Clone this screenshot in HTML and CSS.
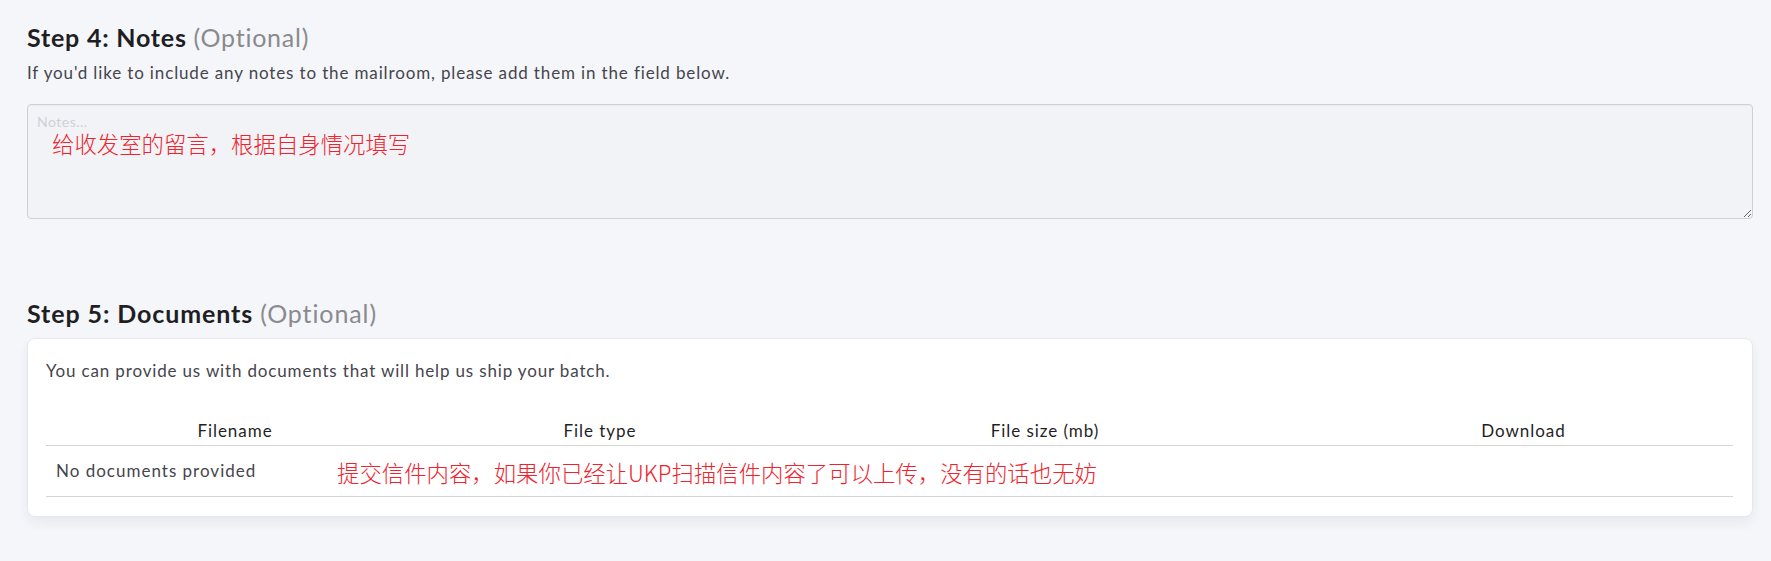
FILE: index.html
```html
<!DOCTYPE html>
<html lang="en">
<head>
<meta charset="utf-8">
<title>Notes and Documents</title>
<link rel="stylesheet" href="styles.css">
</head>
<body>
<main class="page">
  <section class="step">
    <h2 class="step-title">Step 4: Notes <span class="optional">(Optional)</span></h2>
    <p class="step-desc">If you'd like to include any notes to the mailroom, please add them in the field below.</p>
    <div class="notes-wrap">
      <textarea class="notes" placeholder="Notes..."></textarea>
      <span class="annot annot-notes">给收发室的留言，根据自身情况填写</span>
    </div>
  </section>

  <section class="step step-docs">
    <h2 class="step-title step-title-wide">Step 5: Documents <span class="optional">(Optional)</span></h2>
    <div class="card">
      <p class="card-desc">You can provide us with documents that will help us ship your batch.</p>
      <table class="docs">
        <colgroup>
          <col class="c-name">
          <col class="c-type">
          <col class="c-size">
          <col class="c-dl">
        </colgroup>
        <thead>
          <tr>
            <th>Filename</th>
            <th>File type</th>
            <th>File size (mb)</th>
            <th>Download</th>
          </tr>
        </thead>
        <tbody>
          <tr>
            <td colspan="4" class="empty">No documents provided<span class="annot annot-docs">提交信件内容，如果你已经让UKP扫描信件内容了可以上传，没有的话也无妨</span></td>
          </tr>
        </tbody>
      </table>
    </div>
  </section>
</main>
</body>
</html>
```

FILE: styles.css
```css
* { box-sizing: border-box; }

html, body {
  margin: 0;
  padding: 0;
  background: #f5f6fa;
}

body {
  font-family: Lato, "Noto Sans", sans-serif;
  color: #3c3c44;
}

.page {
  padding: 22px 18px 40px 27px;
}

.step-title {
  margin: 0;
  font-size: 25px;
  line-height: 30px;
  font-weight: 700;
  color: #1e1e24;
  letter-spacing: 0.78px;
}

.step-title-wide {
  letter-spacing: 0.9px;
}

.optional {
  font-weight: 400;
  color: #8a8a8e;
}

.step-desc {
  margin: 9px 0 0;
  font-size: 17px;
  line-height: 24px;
  letter-spacing: 0.86px;
  color: #45454d;
}

.notes-wrap {
  position: relative;
  margin-top: 19px;
}

.notes {
  display: block;
  width: 100%;
  height: 115px;
  margin: 0;
  padding: 8px 9px;
  background: #f2f3f7;
  border: 1px solid #cfd0d5;
  border-radius: 4px;
  box-shadow: inset 0 1px 1px rgba(0, 0, 0, 0.03);
  font-family: Lato, "Noto Sans", sans-serif;
  font-size: 14px;
  line-height: 18px;
  letter-spacing: 0.5px;
  color: #333;
  resize: vertical;
}

.notes::placeholder {
  color: #cdd1d6;
}

.annot {
  font-family: "Noto Sans CJK SC", sans-serif;
  font-size: 22.4px;
  font-weight: 300;
  line-height: 30px;
  letter-spacing: 0;
  color: #f0222c;
  white-space: nowrap;
  pointer-events: none;
}

.annot-notes {
  position: absolute;
  left: 25px;
  top: 24px;
}

.step-docs {
  margin-top: 79px;
}

.card {
  margin-top: 10px;
  background: #ffffff;
  border: 1px solid #e7e8ec;
  border-radius: 8px;
  padding: 20px 19px 19px 18px;
  box-shadow: 0 6px 12px rgba(30, 35, 60, 0.06);
}

.card-desc {
  margin: 0 0 32px;
  font-size: 17px;
  line-height: 24px;
  letter-spacing: 0.84px;
  color: #45454d;
}

.docs {
  width: 100%;
  border-collapse: collapse;
  table-layout: fixed;
}

.c-name { width: 378px; }
.c-type { width: 352px; }
.c-size { width: 538px; }
.c-dl { width: auto; }

.docs th {
  padding: 4px 8px 2px;
  font-size: 17px;
  line-height: 24px;
  font-weight: 400;
  letter-spacing: 0.95px;
  color: #1f1f26;
  text-align: center;
  border-bottom: 1px solid #d4d4d8;
}

.docs td {
  position: relative;
  padding: 13px 10px 13px 10px;
  font-size: 17px;
  line-height: 24px;
  letter-spacing: 1px;
  color: #45454d;
  border-bottom: 1px solid #d4d4d8;
}

.annot-docs {
  position: absolute;
  left: 291px;
  top: 11px;
}
```
